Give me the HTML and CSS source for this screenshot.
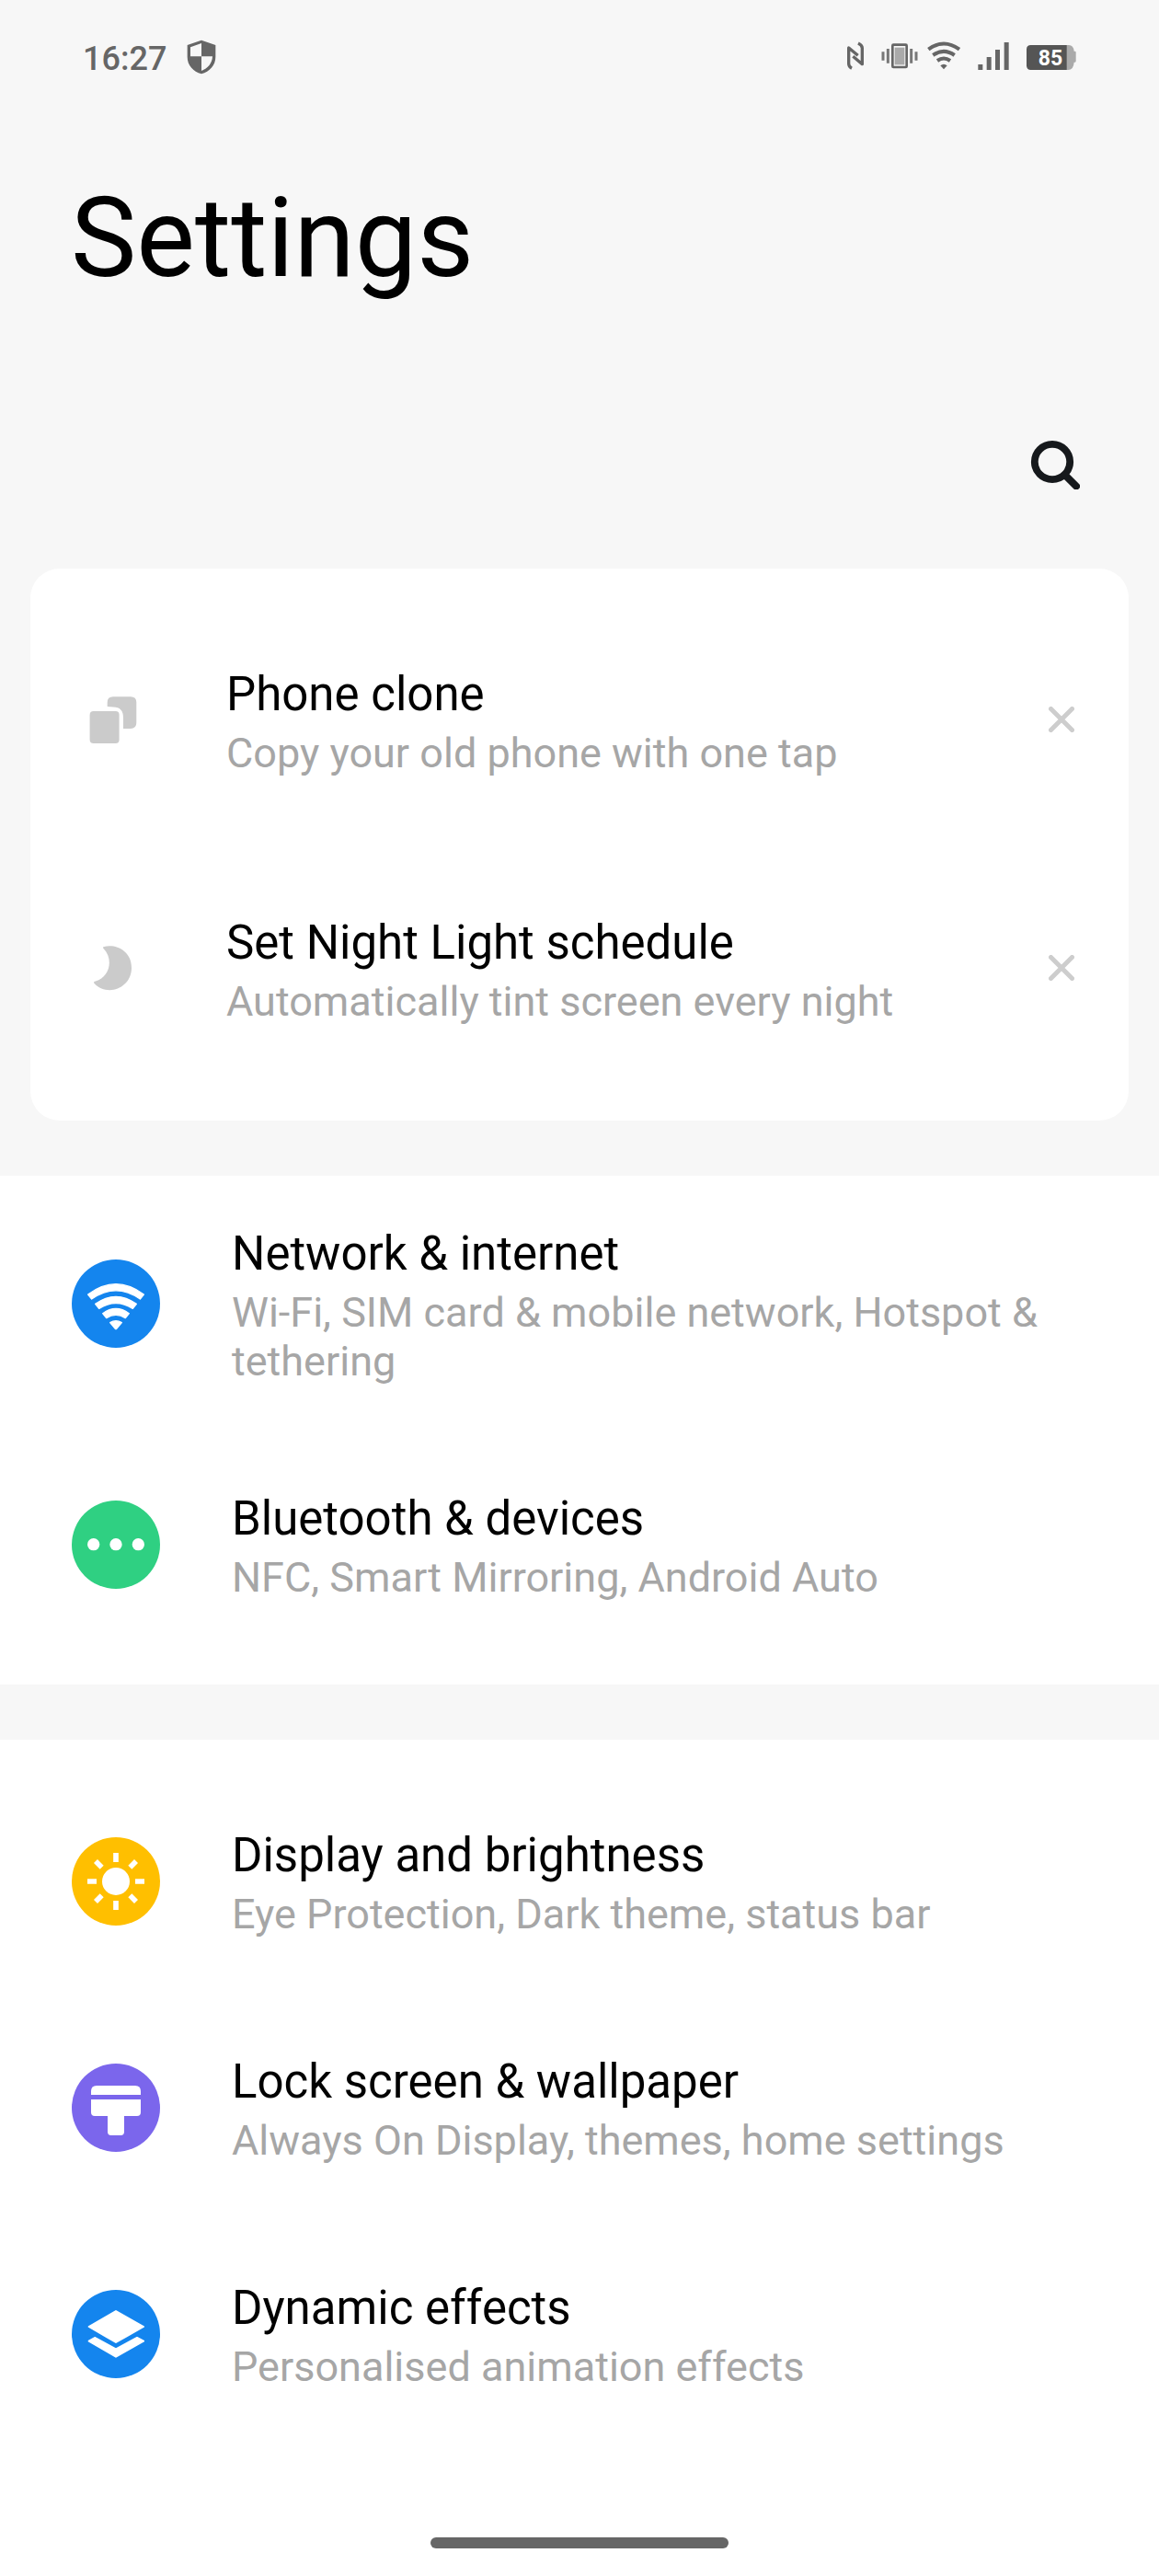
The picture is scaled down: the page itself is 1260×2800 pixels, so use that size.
FILE: index.html
```html
<!DOCTYPE html>
<html lang="en">
<head>
  <meta charset="UTF-8">
  <meta name="viewport" content="width=device-width, initial-scale=1.0">
  <title>Settings</title>
  <link rel="stylesheet" href="styles.css">
</head>
<body>
  <div class="status-bar">
    <span class="clock">16:27</span>
    <svg class="shield" width="32" height="38" viewBox="0 0 96 114">
      <path fill="#666" fill-rule="evenodd" d="M48 2L94 18V56C94 84 75 104 48 112C21 104 2 84 2 56V18ZM48 12V55H12V25ZM48 55H84C83 77 69 95 48 102Z"/>
    </svg>
    <div class="status-icons">
      <svg class="nfc" width="20" height="31" viewBox="60 45 60 93">
        <path fill="none" stroke="#666" stroke-width="10" stroke-linejoin="round" d="M78 133C70 129 68 125 68 118V66L98 91M99 51C109 56 112 60 112 67V119L82 94"/>
      </svg>
      <svg class="vibrate" width="42" height="31" viewBox="171 45 126 93">
        <rect x="211" y="56" width="46" height="73" rx="3" fill="#f7f7f7" stroke="#666" stroke-width="8"/>
        <rect x="218" y="65" width="32" height="56" fill="#aaa"/>
        <path stroke="#777" stroke-width="9" d="M196 69V116M272 69V116M180 79V107M288 79V107"/>
      </svg>
      <svg class="wifi" width="38" height="31" viewBox="321 45 114 93">
        <path fill="none" stroke="#666" stroke-width="12" d="M328 71Q378 34 429 71M343 90Q378 65 413 90M357 108Q378 93 399 108"/>
        <path fill="#666" d="M367 124Q378 115 389 124L378 136Z"/>
      </svg>
      <svg class="signal" width="36" height="31" viewBox="486 45 108 93">
        <path fill="#666" d="M490 120h15v18h-15zM518 96h15v42h-15zM546 72h15v66h-15zM575 48h15v90h-15z"/>
      </svg>
      <svg class="battery" width="56" height="31" viewBox="645 45 168 93">
        <path fill="#aaa" d="M776 57h10q15 0 17 20h3q3 0 3 4v28q0 4-3 4h-3q-2 25-19 25h-8z"/>
        <path fill="#555" d="M662 57H779V138H662Q648 138 648 124V71Q648 57 662 57Z"/>
        <text x="726" y="123" class="battery-level">85</text>
      </svg>
    </div>
  </div>

  <h1>Settings</h1>

  <div class="toolbar">
    <svg width="54" height="54" viewBox="0 0 54 54" fill="none" stroke="#16191c">
      <circle cx="24" cy="24" r="19.2" stroke-width="7.8"/>
      <path d="M38 38.5L50 50.5" stroke-width="8" stroke-linecap="round"/>
    </svg>
  </div>

  <div class="card">
    <div class="tip">
      <svg class="tip-icon" width="52" height="52" viewBox="0 0 52 52" fill="#cbcbcb">
        <rect x="0.6" y="17" width="32" height="35" rx="4"/>
        <path d="M19.7 12V7.500Q19.700 1.300 26 1.300H45Q51.300 1.300 51.300 7.500V29.500Q51.300 36 45 36H37V24Q37 12.500 26 12.500Z"/>
      </svg>
      <div class="text">
        <div class="title">Phone clone</div>
        <div class="summary">Copy your old phone with one tap</div>
      </div>
      <svg class="close" width="28" height="28" viewBox="0 0 28 28">
        <path stroke="#cdcdcd" stroke-width="5" stroke-linecap="round" d="M2.500 2.500L25.500 25.500M25.500 2.500L2.500 25.500"/>
      </svg>
    </div>
    <div class="tip">
      <svg class="tip-icon" width="52" height="52" viewBox="0 0 52 52" fill="#cbcbcb">
        <path d="M15.500 3.300C28 -0.500 46 7 46 26C46 48 20 58 5.500 43Q4 41 7 40.500C22 36 27 17 15.500 5Q14.500 4 15.500 3.300Z"/>
      </svg>
      <div class="text">
        <div class="title">Set Night Light schedule</div>
        <div class="summary">Automatically tint screen every night</div>
      </div>
      <svg class="close" width="28" height="28" viewBox="0 0 28 28">
        <path stroke="#cdcdcd" stroke-width="5" stroke-linecap="round" d="M2.500 2.500L25.500 25.500M25.500 2.500L2.500 25.500"/>
      </svg>
    </div>
  </div>

  <div class="group connections">
    <div class="item item-tall">
      <svg class="icon" viewBox="0 0 288 288">
        <circle cx="144" cy="144" r="144" fill="#1485ee"/>
        <g fill="#fff" stroke="#fff" stroke-width="4" stroke-linejoin="round">
          <path d="M53 114Q144 46 235 114L223 129Q144 74 65 129Z"/>
          <path d="M77 145Q144 97 211 145L199 160Q144 125 89 160Z"/>
          <path d="M101 176Q144 145 187 176L175 191Q144 171 113 191Z"/>
          <path d="M125 206Q144 194 163 206L146 226Q144 228 142 226Z"/>
        </g>
      </svg>
      <div class="text">
        <div class="title">Network &amp; internet</div>
        <div class="summary">Wi-Fi, SIM card &amp; mobile network, Hotspot &amp; tethering</div>
      </div>
    </div>
    <div class="item">
      <svg class="icon" viewBox="0 0 288 288">
        <circle cx="144" cy="144" r="144" fill="#2fd082"/>
        <g fill="#fff">
          <circle cx="71" cy="143" r="20"/>
          <circle cx="144" cy="143" r="20"/>
          <circle cx="217" cy="143" r="20"/>
        </g>
      </svg>
      <div class="text">
        <div class="title">Bluetooth &amp; devices</div>
        <div class="summary">NFC, Smart Mirroring, Android Auto</div>
      </div>
    </div>
  </div>

  <div class="group personal">
    <div class="item">
      <svg class="icon" viewBox="0 0 288 288">
        <circle cx="144" cy="144" r="144" fill="#ffbf00"/>
        <circle cx="144" cy="144" r="45" fill="#fff"/>
        <path stroke="#fff" stroke-width="17" d="M144 51V81M144 207V237M51 144H81M207 144H237M78 78L98 98M190 190L210 210M210 78L190 98M98 190L78 210"/>
      </svg>
      <div class="text">
        <div class="title">Display and brightness</div>
        <div class="summary">Eye Protection, Dark theme, status bar</div>
      </div>
    </div>
    <div class="item">
      <svg class="icon" viewBox="0 0 288 288">
        <circle cx="144" cy="144" r="144" fill="#7b66ec"/>
        <path fill="#fff" d="M63 102V90Q63 72 81 72H207Q225 72 225 90V102ZM63 117H225V159Q225 171 213 171H171V223Q171 234 160 234H128Q117 234 117 223V171H75Q63 171 63 159Z"/>
      </svg>
      <div class="text">
        <div class="title">Lock screen &amp; wallpaper</div>
        <div class="summary">Always On Display, themes, home settings</div>
      </div>
    </div>
    <div class="item">
      <svg class="icon" viewBox="0 0 288 288">
        <circle cx="144" cy="144" r="144" fill="#1485ee"/>
        <path fill="#fff" stroke="#fff" stroke-width="6" stroke-linejoin="round" d="M144 69L234 120L144 171L56 120ZM75 156L144 193L213 156L234 167L144 218L56 167Z"/>
      </svg>
      <div class="text">
        <div class="title">Dynamic effects</div>
        <div class="summary">Personalised animation effects</div>
      </div>
    </div>
    <div class="nav-handle"></div>
  </div>
</body>
</html>
```

FILE: styles.css
```css
* {
  box-sizing: border-box;
}
body {
  margin: 0;
  font-family: Roboto, sans-serif;
  background-color: #f7f7f7;
  color: #000;
}
svg {
  display: block;
  flex: none;
}
.status-bar {
  display: flex;
  align-items: flex-start;
  height: 120px;
  padding: 43px 89px 0 90px;
}
.clock {
  width: 113px;
  font-size: 36px;
  font-weight: 500;
  line-height: 42px;
  color: #666;
}
.status-icons {
  display: flex;
  margin-top: 2px;
  margin-left: auto;
}
.vibrate {
  margin-left: 17px;
}
.wifi {
  margin-left: 8px;
}
.signal, .battery {
  margin-left: 17px;
}
.battery-level {
  font-size: 69px;
  font-weight: bold;
  text-anchor: middle;
  fill: #fff;
}
h1 {
  margin: 0;
  padding: 69px 77px 0;
  height: 358px;
  font-size: 120px;
  font-weight: normal;
  line-height: 140px;
}
.toolbar {
  display: flex;
  justify-content: flex-end;
  height: 140px;
  padding-right: 86px;
}
.card {
  margin: 0 33px;
  padding: 30px 0;
  background-color: #fff;
  border-radius: 32px;
}
.tip {
  display: flex;
  align-items: center;
  height: 270px;
  padding: 0 59px 0 64px;
}
.tip-icon {
  margin-bottom: 3px;
}
.tip .text {
  margin-left: 97px;
}
.close {
  margin-bottom: 2px;
}
.text {
  flex: 1;
  padding-top: 3px;
}
.title {
  font-size: 51px;
  line-height: 60px;
}
.summary {
  margin-top: 7px;
  font-size: 45px;
  line-height: 53px;
  color: #a6a6a6;
}
.group {
  background-color: #fff;
}
.connections {
  margin-top: 60px;
  padding-bottom: 29px;
}
.personal {
  margin-top: 60px;
  padding: 31px 0 30px;
}
.item {
  display: flex;
  align-items: center;
  gap: 78px;
  height: 246px;
  padding: 0 78px;
}
.item-tall {
  height: 278px;
}
.item-tall .text {
  padding-top: 5px;
}
.icon {
  width: 96px;
  height: 96px;
}
.nav-handle {
  width: 324px;
  height: 12px;
  margin: 98px auto 0;
  border-radius: 6px;
  background-color: #666;
}
```
